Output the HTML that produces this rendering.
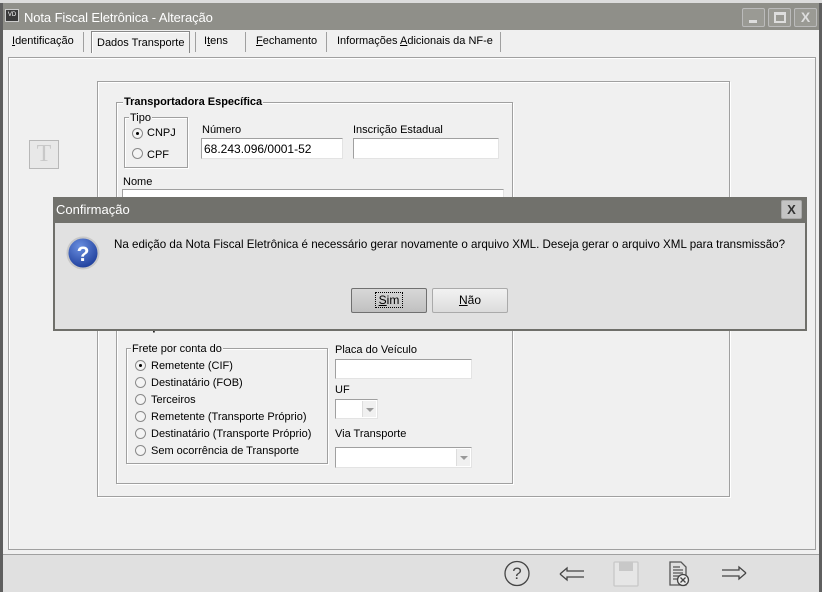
<!DOCTYPE html>
<html><head><meta charset="utf-8"><style>
*{margin:0;padding:0;box-sizing:border-box}
body{width:822px;height:592px;overflow:hidden;background:#f0f0f0;font-family:"Liberation Sans",sans-serif;font-size:11px;color:#000;position:relative}
.a{position:absolute}
.inp{position:absolute;background:#fff;border:1px solid #a0a0a0;border-right-color:#e3e3e3;border-bottom-color:#e3e3e3}
.grp{position:absolute;border:1px solid #a0a0a0;box-shadow:1px 1px 0 #fff inset,1px 1px 0 #fff}
.lg{position:absolute;background:#f0f0f0;padding:0 1px;line-height:12px}
.rad{position:absolute;width:11px;height:11px;border-radius:50%;border:1px solid #8a8a8a;background:#f4f4f4}
.rad.on::after{content:"";position:absolute;left:3px;top:3px;width:3px;height:3px;border-radius:50%;background:#000}
.t{position:absolute;white-space:nowrap;line-height:13px}
.tab{position:absolute;top:32px;height:20px;line-height:18px;white-space:nowrap;font-size:11px}
.sep{position:absolute;top:32px;width:1px;height:20px;background:#a0a0a0}
.btn{position:absolute;border:1px solid #707070;border-radius:2px;background:linear-gradient(#f2f2f2,#dcdcdc);text-align:center;line-height:23px}
.dd{position:absolute;width:14px;border-left:1px solid #ddd;background:#f0f0f0}
.dd::after{content:"";position:absolute;left:3px;top:7px;border:4px solid transparent;border-top:4px solid #999}
</style></head><body>
<div class="a" style="left:0;top:0;width:822px;height:3px;background:#dcdcdc"></div>
<div class="a" style="left:0;top:3px;width:822px;height:27px;background:#8f8f89"></div>
<div class="a" style="left:0;top:3px;width:3px;height:589px;background:#5f5f5f"></div>
<div class="a" style="left:819px;top:3px;width:3px;height:589px;background:#5f5f5f"></div>
<div class="a" style="left:5px;top:9px;width:14px;height:13px;background:#3a3a3a;border:1px solid #ccc;color:#fff;font-size:6px;line-height:11px;text-align:center">VD</div>
<div class="t" style="left:24px;top:9px;font-size:13px;line-height:17px;color:#fff;letter-spacing:-0.1px">Nota Fiscal Eletrônica - Alteração</div>
<div class="a" style="left:742px;top:8px;width:23px;height:19px;border:1px solid #bbb;border-radius:2px;background:#9a9a94"><div class="a" style="left:6px;top:11px;width:8px;height:3px;background:#ddd"></div></div>
<div class="a" style="left:768px;top:8px;width:23px;height:19px;border:1px solid #bbb;border-radius:2px;background:#9a9a94"><div class="a" style="left:5px;top:3px;width:12px;height:11px;border:2px solid #ddd;border-top-width:3px"></div></div>
<div class="a" style="left:794px;top:8px;width:23px;height:19px;border:1px solid #bbb;border-radius:2px;background:#9a9a94;color:#ddd;font-weight:bold;font-size:14px;text-align:center;line-height:17px">X</div>
<div class="tab" style="left:12px"><u>I</u>dentificação</div>
<div class="sep" style="left:83px"></div>
<div class="a" style="left:91px;top:31px;width:99px;height:22px;border:1px solid #888;border-bottom:none;background:#f0f0f0;box-shadow:1px 1px 0 #fff inset"></div>
<div class="tab" style="left:97px;top:34px">Dados Transporte</div>
<div class="sep" style="left:195px"></div>
<div class="tab" style="left:204px">I<u>t</u>ens</div>
<div class="sep" style="left:245px"></div>
<div class="tab" style="left:256px"><u>F</u>echamento</div>
<div class="sep" style="left:326px"></div>
<div class="tab" style="left:337px">Informações <u>A</u>dicionais da NF-e</div>
<div class="sep" style="left:500px"></div>
<div class="a" style="left:8px;top:57px;width:808px;height:493px;border:1px solid #a0a0a0;box-shadow:1px 1px 0 #fff inset"></div>
<div class="a" style="left:3px;top:554px;width:816px;height:38px;background:#e0e0e0;border-top:1px solid #a0a0a0"></div>
<div class="a" style="left:29px;top:140px;width:30px;height:29px;border:1px solid #b8b8b8;background:#e8e8e8;color:#c8c8c8;font-family:'Liberation Serif',serif;font-size:24px;text-align:center;line-height:27px">T</div>
<div class="grp" style="left:97px;top:81px;width:633px;height:416px"></div>
<div class="grp" style="left:116px;top:102px;width:397px;height:382px"></div>
<div class="lg" style="left:123px;top:96px;font-weight:bold">Transportadora Específica</div>
<div class="grp" style="left:124px;top:117px;width:64px;height:51px"></div>
<div class="lg" style="left:129px;top:112px">Tipo</div>
<div class="rad on" style="left:132px;top:128px"></div><div class="t" style="left:147px;top:127px">CNPJ</div>
<div class="rad" style="left:132px;top:148px"></div><div class="t" style="left:147px;top:149px">CPF</div>
<div class="t" style="left:202px;top:124px">Número</div>
<div class="inp" style="left:201px;top:138px;width:142px;height:21px;padding:3px 2px;font-size:12px">68.243.096/0001-52</div>
<div class="t" style="left:353px;top:124px">Inscrição Estadual</div>
<div class="inp" style="left:353px;top:138px;width:146px;height:21px"></div>
<div class="t" style="left:123px;top:176px">Nome</div>
<div class="inp" style="left:122px;top:189px;width:382px;height:12px;border-bottom:none"></div>
<div class="t" style="left:123px;top:321px;font-weight:bold">Transporte</div>
<div class="grp" style="left:126px;top:348px;width:202px;height:116px"></div>
<div class="lg" style="left:131px;top:343px">Frete por conta do</div>
<div class="rad on" style="left:135px;top:360px"></div><div class="t" style="left:151px;top:360px">Remetente (CIF)</div>
<div class="rad" style="left:135px;top:377px"></div><div class="t" style="left:151px;top:377px">Destinatário (FOB)</div>
<div class="rad" style="left:135px;top:394px"></div><div class="t" style="left:151px;top:394px">Terceiros</div>
<div class="rad" style="left:135px;top:411px"></div><div class="t" style="left:151px;top:411px">Remetente (Transporte Próprio)</div>
<div class="rad" style="left:135px;top:428px"></div><div class="t" style="left:151px;top:428px">Destinatário (Transporte Próprio)</div>
<div class="rad" style="left:135px;top:445px"></div><div class="t" style="left:151px;top:445px">Sem ocorrência de Transporte</div>
<div class="t" style="left:335px;top:344px">Placa do Veículo</div>
<div class="inp" style="left:335px;top:359px;width:137px;height:20px"></div>
<div class="t" style="left:335px;top:384px">UF</div>
<div class="inp" style="left:335px;top:399px;width:43px;height:20px"><div class="dd" style="right:1px;top:1px;height:16px"></div></div>
<div class="t" style="left:335px;top:428px">Via Transporte</div>
<div class="inp" style="left:335px;top:447px;width:137px;height:21px"><div class="dd" style="right:1px;top:1px;height:17px"></div></div>
<div class="a" style="left:53px;top:197px;width:754px;height:134px;background:#e1e1e1;border:2px solid #6f6f6a;border-top:none"></div>
<div class="a" style="left:53px;top:197px;width:754px;height:26px;background:#71716c"></div>
<div class="t" style="left:56px;top:202px;font-size:13px;line-height:16px;color:#fff">Confirmação</div>
<div class="a" style="left:781px;top:200px;width:21px;height:19px;border:1px solid #aaa;border-radius:2px;background:#c4c4c4;font-weight:bold;font-size:13px;text-align:center;line-height:17px;color:#333">X</div>
<svg class="a" style="left:66px;top:236px" width="34" height="34"><defs><radialGradient id="g" cx="40%" cy="30%" r="70%"><stop offset="0" stop-color="#6a8fe0"/><stop offset="1" stop-color="#1f3f9c"/></radialGradient></defs><circle cx="17" cy="17" r="15.5" fill="url(#g)" stroke="#c8c8c8" stroke-width="2"/><text x="17" y="25" text-anchor="middle" font-family="Liberation Sans" font-weight="bold" font-size="21" fill="#fff">?</text></svg>
<div class="t" style="left:114px;top:237px;font-size:11.6px;line-height:15px">Na edição da Nota Fiscal Eletrônica é necessário gerar novamente o arquivo XML. Deseja gerar o arquivo XML para transmissão?</div>
<div class="btn" style="left:351px;top:288px;width:76px;height:25px;background:linear-gradient(#d8d8d8,#c0c0c0);font-size:12px"><span style="border:1px dotted #000;padding:0 3px"><u>S</u>im</span></div>
<div class="btn" style="left:432px;top:288px;width:76px;height:25px;border-color:#aaa;font-size:12px"><u>N</u>ão</div>
<svg class="a" style="left:500px;top:558px" width="260" height="32" fill="none" stroke="#444" stroke-width="1.3">
<circle cx="17" cy="15.5" r="12"/><text x="17" y="21" text-anchor="middle" font-family="Liberation Sans" font-size="17" fill="#444" stroke="none">?</text>
<path d="M60 16 L67 10 V13 H84 M60 16 L67 22 V19 H84"/>
<rect x="114" y="4" width="24" height="24" rx="1" stroke="#c8c8c8" fill="#e6e6e6"/><rect x="119" y="4" width="14" height="9" fill="#c8c8c8" stroke="none"/>
<path d="M170 4 H181 L186 9 V27 H170 Z M173 9 H180 M173 12 H183 M173 15 H183 M173 18 H180 M173 21 H180" stroke="#555"/>
<circle cx="183" cy="22" r="5.5" fill="#eee" stroke="#444"/><path d="M180.5 19.5 L185.5 24.5 M185.5 19.5 L180.5 24.5"/>
<path d="M246 15 L239 9 V12 H222 M246 15 L239 21 V18 H222"/>
</svg>
</body></html>
